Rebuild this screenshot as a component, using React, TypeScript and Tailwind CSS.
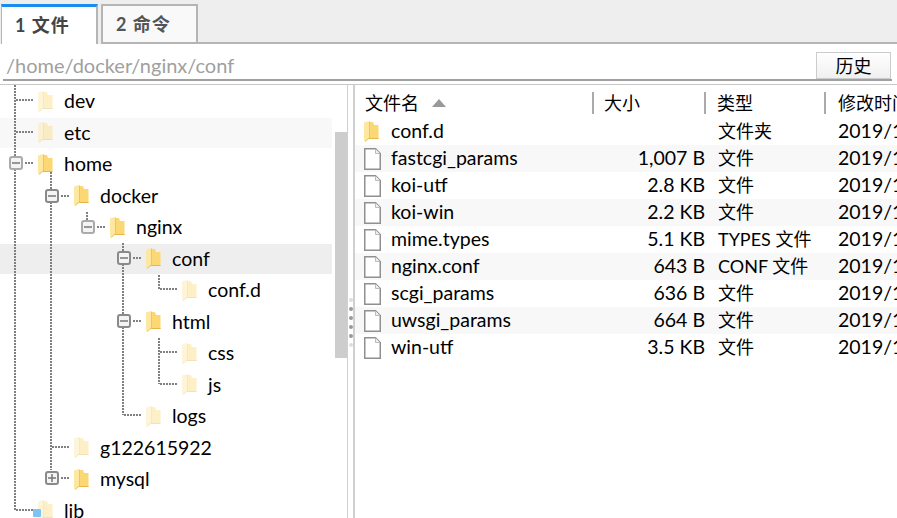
const font = "font-['Lato','Noto_Sans_CJK_SC',sans-serif]";

type TreeRow = { name: string; depth: number; pale?: boolean; shaded?: string };

const treeRows: TreeRow[] = [
  { name: "dev", depth: 0, pale: true },
  { name: "etc", depth: 0, pale: true, shaded: "bg-[#f8f8f8]" },
  { name: "home", depth: 0 },
  { name: "docker", depth: 1 },
  { name: "nginx", depth: 2 },
  { name: "conf", depth: 3, shaded: "bg-[#eeeeee]" },
  { name: "conf.d", depth: 4, pale: true },
  { name: "html", depth: 3 },
  { name: "css", depth: 4, pale: true },
  { name: "js", depth: 4, pale: true },
  { name: "logs", depth: 3, pale: true },
  { name: "g122615922", depth: 1, pale: true },
  { name: "mysql", depth: 1 },
  { name: "lib", depth: 0, pale: true },
];

const files = [
  { name: "conf.d", size: "", type: "文件夹", folder: true },
  { name: "fastcgi_params", size: "1,007 B", type: "文件" },
  { name: "koi-utf", size: "2.8 KB", type: "文件" },
  { name: "koi-win", size: "2.2 KB", type: "文件" },
  { name: "mime.types", size: "5.1 KB", type: "TYPES 文件" },
  { name: "nginx.conf", size: "643 B", type: "CONF 文件" },
  { name: "scgi_params", size: "636 B", type: "文件" },
  { name: "uwsgi_params", size: "664 B", type: "文件" },
  { name: "win-utf", size: "3.5 KB", type: "文件" },
];

function FolderIcon({ pale }: { pale?: boolean }) {
  return (
    <svg width="15" height="21" viewBox="0 0 15 21" className={`shrink-0 ${pale ? "opacity-40" : ""}`}>
      <path d="M4 1 H9 L10 4 H14.5 V18 H4 Z" fill="#fbd873" />
      <path d="M5 17 H14.5 V18 H5 Z" fill="#e6b54e" />
      <path d="M0 1.5 L5 0 V16.5 L1 21 L0 19 Z" fill="#fee8a0" />
      <path d="M5 0 L6 1 V17 L1 21 L1 20 L5 16.5 Z" fill="#eec46a" />
    </svg>
  );
}

function FileIcon() {
  return (
    <svg width="17" height="22" viewBox="0 0 17 22" className="shrink-0">
      <path d="M0.75 0.75 H11.5 L16.25 5.5 V21.25 H0.75 Z" fill="#ffffff" stroke="#909090" strokeWidth="1.5" />
      <path d="M11.5 1 V5.5 H16" fill="#f0f0f0" stroke="#bbbbbb" />
    </svg>
  );
}

function Expander({ x, y, plus, light }: { x: number; y: number; plus?: boolean; light?: boolean }) {
  return (
    <g>
      <rect x={x - 6} y={y - 6} width="12" height="12" rx="2" fill="#f4f4f4" stroke={light ? "#aaaaaa" : "#8a8a8a"} strokeWidth="2" />
      <path d={`M${x - 4} ${y}H${x + 4}`} stroke="#777777" strokeWidth="1.5" />
      {plus && <path d={`M${x} ${y - 4}V${y + 4}`} stroke="#777777" strokeWidth="1.5" />}
    </g>
  );
}

function TreeLines() {
  const guides = [
    "M15 85V511",
    "M16 100H34",
    "M16 132H34",
    "M25 163H34",
    "M16 510H34",
    "M51 172V470",
    "M61 196H70",
    "M52 447H70",
    "M61 478H70",
    "M87 212V220",
    "M97 227H106",
    "M123 243V415",
    "M133 258H142",
    "M133 321H142",
    "M124 415H142",
    "M159 275V289",
    "M160 289H178",
    "M159 338V384",
    "M160 352H178",
    "M160 384H178",
  ];
  return (
    <svg width="332" height="433" viewBox="0 85 332 433" className="pointer-events-none absolute left-0 top-0">
      {guides.map((d) => (
        <path key={d} d={d} fill="none" stroke="#808080" strokeWidth="2" strokeDasharray="2 1" />
      ))}
      <Expander x={16} y={163} light />
      <Expander x={52} y={196} />
      <Expander x={88} y={227} light />
      <Expander x={124} y={258} />
      <Expander x={124} y={321} />
      <Expander x={52} y={478} plus />
    </svg>
  );
}

function FolderTree() {
  return (
    <div className="relative w-[332px] shrink-0 overflow-hidden">
      <div className="flex flex-col gap-[1.5px] pt-[1px]">
        {treeRows.map((row) => (
          <div key={row.name} className={`flex h-[30px] shrink-0 items-center ${row.shaded ?? ""}`}>
            {row.depth === 0 && <div className="w-[38px] shrink-0" />}
            {row.depth === 1 && <div className="w-[74px] shrink-0" />}
            {row.depth === 2 && <div className="w-[110px] shrink-0" />}
            {row.depth === 3 && <div className="w-[146px] shrink-0" />}
            {row.depth === 4 && <div className="w-[182px] shrink-0" />}
            <FolderIcon pale={row.pale} />
            <span className="ml-[11px] text-[19.5px] leading-none text-black">{row.name}</span>
          </div>
        ))}
      </div>
      <TreeLines />
      <div className="absolute bottom-[1px] left-[33px] h-[8px] w-[8px] rounded-[1px] bg-[#7cc4f5]" />
    </div>
  );
}

function Scrollbar() {
  return (
    <div className="ml-[3px] w-[12px] shrink-0 pt-[47px]">
      <div className="h-[226px] bg-[#cdcdcd]" />
    </div>
  );
}

function Splitter() {
  return (
    <div className="flex w-[8px] shrink-0 flex-col items-center justify-center gap-[5px] border-l border-r-2 border-[#d0d0d0] pt-[42px]">
      <div className="h-[4px] w-[4px] rounded-full bg-[#dddddd]" />
      <div className="h-[4px] w-[4px] rounded-full bg-[#999999]" />
      <div className="h-[4px] w-[4px] rounded-full bg-[#999999]" />
      <div className="h-[4px] w-[4px] rounded-full bg-[#999999]" />
      <div className="h-[4px] w-[4px] rounded-full bg-[#999999]" />
      <div className="h-[4px] w-[4px] rounded-full bg-[#dddddd]" />
    </div>
  );
}

function FileList() {
  return (
    <div className="min-w-0 flex-1 overflow-hidden">
      <div className="flex h-[33px] w-[620px] items-center pt-[3px] text-[18px] text-black">
        <div className="flex h-[22px] w-[239px] shrink-0 items-center border-r-2 border-[#aaaaaa] pl-[10px]">
          文件名
          <div className="ml-[13px] h-0 w-0 border-x-[7px] border-b-[8px] border-x-transparent border-b-[#999999]" />
        </div>
        <div className="flex h-[22px] w-[112px] shrink-0 items-center border-r-2 border-[#aaaaaa] pl-[10px]">大小</div>
        <div className="flex h-[22px] w-[120px] shrink-0 items-center border-r-2 border-[#aaaaaa] pl-[11px]">类型</div>
        <div className="flex h-[22px] w-[149px] shrink-0 items-center whitespace-nowrap pl-[12px]">修改时间</div>
      </div>
      {files.map((file, i) => (
        <div
          key={file.name}
          className={`flex h-[27px] w-[620px] items-center text-[19.5px] leading-none text-black ${i % 2 === 1 ? "bg-[#f8f8f8]" : ""}`}
        >
          <div className="flex w-[239px] shrink-0 items-center pl-[9px]">
            {file.folder ? <FolderIcon /> : <FileIcon />}
            <span className={`pb-[2px] ${file.folder ? "ml-[12px]" : "ml-[10px]"}`}>{file.name}</span>
          </div>
          <div className="w-[111px] shrink-0 pb-[2px] text-right">{file.size}</div>
          <div className="w-[133px] shrink-0 whitespace-nowrap pb-[2px] pl-[13px] text-[18px]">{file.type}</div>
          <div className="whitespace-nowrap pb-[2px]">2019/11/11</div>
        </div>
      ))}
    </div>
  );
}

export default function App() {
  return (
    <div className={`flex h-[518px] w-[897px] flex-col overflow-hidden bg-white ${font}`}>
      <div className="flex h-[44px] shrink-0 items-end bg-[#eeeeee] pl-[1px] pt-[1px]">
        <div className="flex h-[40px] w-[97px] flex-col justify-center border-r-2 border-l border-[#b5b5b5] border-t-[3px] border-t-[#1a8cf0] bg-white pl-[13px] text-[18px] font-bold text-[#444444]">
          <span className="tracking-[1px]">1 文件</span>
        </div>
        <div className="ml-[3px] flex h-[40px] w-[97px] items-center border-2 border-[#b5b5b5] bg-[#f9f9f9] pl-[13px] text-[18px] font-bold text-[#555555]">
          <span className="tracking-[1px]">2 命令</span>
        </div>
        <div className="h-[2px] flex-1 bg-[#b5b5b5]" />
      </div>
      <div className="mx-[3px] mr-[5px] flex h-[37px] shrink-0 items-end border-b-2 border-[#a0a0a0]">
        <div className="flex-1 self-center pl-[3px] pt-[6px] text-[20px] leading-none text-[#a0a0a0]">/home/docker/nginx/conf</div>
        <button className="mr-[1px] h-[27px] w-[75px] border border-[#cccccc] bg-linear-to-b from-white to-[#f0f0f0] text-[18px] leading-none text-black">
          历史
        </button>
      </div>
      <div className="h-[4px] shrink-0 border-b border-[#c8c8c8]" />
      <div className="flex min-h-0 flex-1">
        <FolderTree />
        <Scrollbar />
        <Splitter />
        <FileList />
      </div>
    </div>
  );
}
